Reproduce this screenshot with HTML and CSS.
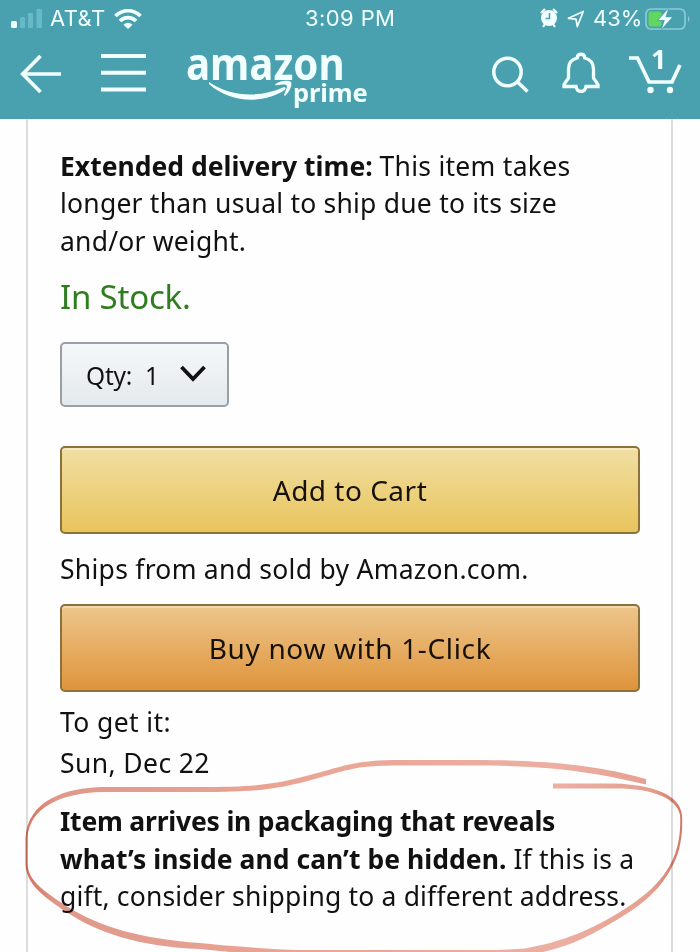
FILE: index.html
```html
<!DOCTYPE html>
<html lang="en">
<head>
<meta charset="utf-8">
<title>Amazon</title>
<link rel="stylesheet" href="styles.css">
</head>
<body>
<div class="screen">
  <header class="top">
    <div class="status">
      <div class="status-left">
        <svg class="signal" width="32" height="20" viewBox="0 0 32 20"><rect x="0" y="12" width="6" height="7" rx="1.5" fill="#f2ffff"/><g fill="#68b9c8"><rect x="9" y="8" width="5" height="11" rx="1"/><rect x="17" y="4" width="5" height="15" rx="1"/><rect x="25.500" y="0" width="5.500" height="19" rx="1"/></g></svg>
        <span class="carrier">AT&amp;T</span>
        <svg class="wifi" width="28" height="22" viewBox="0 0 28 22" fill="none" stroke="#f2ffff" stroke-width="3.700"><path d="M1.500 8A17.500 17.500 0 0 1 26.500 8"/><path d="M6 13A11.300 11.300 0 0 1 22 13"/><path d="M9.500 16.800Q14 12.800 18.500 16.800L14 21Z" fill="#f2ffff" stroke="none"/></svg>
      </div>
      <span class="clock">3:09 PM</span>
      <div class="status-right">
        <svg class="alarm" width="18" height="20" viewBox="0 0 18 20"><circle cx="9" cy="10" r="8" fill="#f2ffff"/><path d="M1 5 5 1M13 1l4 4M3 19l2-3M15 19l-2-3" stroke="#f2ffff" stroke-width="2.200"/><path d="M9.500 5v5.500H5.500" fill="none" stroke="#49a1b0" stroke-width="1.500"/></svg>
        <svg class="locate" width="18" height="18" viewBox="0 0 18 18"><path d="M1.500 8.300 16.300 1.500 10.300 16.500 9 9.200Z" fill="none" stroke="#f2ffff" stroke-width="1.700" stroke-linejoin="round"/></svg>
        <span class="percent">43%</span>
        <svg class="battery" width="46" height="22" viewBox="0 0 46 22"><rect x="1" y="1" width="39" height="20" rx="5" fill="none" stroke="#8bcbd6" stroke-width="1.700"/><path d="M43 8Q46 11 43 14Z" fill="#8bcbd6"/><rect x="3.500" y="3.500" width="13" height="15" rx="2.500" fill="#61d660"/><path d="M23 1 13.500 12h6.300L17 20.500 27 9.300h-6.500Z" fill="#f2ffff" stroke="#49a1b0" stroke-width="1.500" paint-order="stroke"/></svg>
      </div>
    </div>
    <nav class="nav">
      <svg class="back" width="42" height="40" viewBox="0 0 42 40" fill="none" stroke="#f2ffff" stroke-width="3.700"><path d="M20.500 2 2.700 20 20.500 38M2.700 20H41"/></svg>
      <svg class="menu" width="45" height="38" viewBox="0 0 45 38" stroke="#f2ffff" stroke-width="4"><path d="M0 2h45M0 18.700h45M0 35.500h45"/></svg>
      <div class="logo">
        <span class="brand">amazon</span>
        <svg class="smile" width="84" height="22" viewBox="0 0 84 22" fill="#f2ffff"><path d="M0 2C22 17 50 18 74 7.500C76 6.500 78 8.500 75 10.500C52 25 20 22 0 4Z"/><path d="M66.500 4C72 0 80 0 82 2C83.500 5 80.500 12 76.500 15.500C75.500 16 74.800 15.500 75.300 14.300C77 10 78.500 7 77.700 5.500C76.500 4 71.500 4.500 68 5.300C66.500 5.500 65.500 5 66.500 4Z"/></svg>
        <span class="prime">prime</span>
      </div>
      <svg class="search" width="37" height="38" viewBox="0 0 37 38" fill="none" stroke="#f2ffff" stroke-width="3.500"><circle cx="15.500" cy="16" r="13.700"/><path d="M25 25.500 35.500 35.500"/></svg>
      <svg class="bell" width="38" height="42" viewBox="0 0 38 42" fill="none" stroke="#f2ffff" stroke-width="3.300"><path d="M2 34.500V32.500L6.500 26V17C6.500 10.500 10 7.200 15.200 6C15.500 1 22.500 1 22.800 6C28 7.200 31.500 10.500 31.500 17V26L36 32.500V34.500H24C23 41 15 41 14 34.500Z"/></svg>
      <div class="cart">
        <svg width="54" height="40" viewBox="0 0 54 40"><path d="M0 3H8.500L20 27H43L51 10" fill="none" stroke="#f2ffff" stroke-width="3.700"/><circle cx="21.500" cy="35" r="3.200" fill="#f2ffff"/><circle cx="41" cy="35" r="3.200" fill="#f2ffff"/></svg>
        <span class="count">1</span>
      </div>
    </nav>
  </header>
  <main class="card">
    <p class="para">
      <span class="line l1"><b>Extended delivery time:</b> <span class="rest">This item takes</span></span>
      <span class="line l2">longer than usual to ship due to its size</span>
      <span class="line l3">and/or weight.</span>
    </p>
    <p class="stock"><span>In Stock.</span></p>
    <button class="qty"><span class="q">Qty:</span><span>1</span><svg width="28" height="20" viewBox="0 0 28 20"><path d="M2.500 3 14 15 25.500 3" fill="none" stroke="#111" stroke-width="3.800"/></svg></button>
    <button class="btn yellow"><span>Add to Cart</span></button>
    <p class="ships"><span>Ships from and sold by Amazon.com.</span></p>
    <button class="btn orange"><span>Buy now with 1-Click</span></button>
    <p class="get"><span class="line g1">To get it:</span><span class="line g2">Sun, Dec 22</span></p>
    <p class="para notice">
      <span class="line n1"><b>Item arrives in packaging that reveals</b></span>
      <span class="line n2"><b>what’s inside and can’t be hidden.</b> <span class="rest">If this is a</span></span>
      <span class="line n3">gift, consider shipping to a different address.</span>
    </p>
  </main>
  <svg class="ring" width="700" height="212" viewBox="0 740 700 212">
    <defs><linearGradient id="ink" gradientUnits="userSpaceOnUse" x1="0" x2="700" y1="0" y2="0"><stop offset=".035" stop-color="#d56f5a"/><stop offset=".08" stop-color="#e0998a"/><stop offset=".4" stop-color="#eba595"/><stop offset=".8" stop-color="#edb0a3"/><stop offset=".93" stop-color="#e6a090"/><stop offset=".975" stop-color="#d37763"/></linearGradient></defs>
    <path fill="url(#ink)" fill-rule="evenodd" d="M646 779C610 769 565 760 475 760H400C350 760 340 768 300 777.500C270 785 250 787 200 787H103C65 788 28 800 25.500 838V864C26 884 44 897 65 911C95 932 140 947 200 949L260 955H525C565 950 590 936 620 918C655 897 666 879 674 863C681 849 683 830 682 815C680 794 652 785 615 783.500H553V788.500H615C651 788 677 798 680 815C681 830 679 848 671 863C662 880 650 893 620 912C590 930 565 941 525 948.500Q500 950.500 460 950H300C270 949 240 947 200 943C140 939 98 926 68 907C45 892 28 881 27.500 864V838C29 808 60 793 103 792H200C250 792 270 790 300 783C350 770 350 765.500 400 765.500H475C560 765.500 605 775 646 784.500Z"/>
  </svg>
</div>
</body>
</html>
```
FILE: styles.css
```css
* { box-sizing: border-box; }
body { margin: 0; background: #fefefe; }
p { margin: 0; }
svg { display: block; flex: none; }
.screen { position: relative; width: 700px; height: 952px; overflow: hidden; font-family: "Noto Sans", sans-serif; color: #111; white-space: nowrap; }

.top { height: 119px; background: #49a1b0; color: #f2ffff; }
.status { display: grid; grid-template-columns: 1fr auto 1fr; height: 37px; align-items: center; font: 22px/37px Inter, sans-serif; }
.status-left { display: flex; align-items: center; padding-left: 11px; }
.carrier { margin-left: 7px; width: 55px; letter-spacing: .4px; }
.wifi { margin-left: 9px; }
.clock { width: 90px; letter-spacing: .4px; }
.status-right { display: flex; align-items: center; justify-content: flex-end; padding-right: 9px; }
.locate { margin-left: 9px; }
.percent { margin-left: 8px; width: 47px; }
.battery { margin-left: 5px; }
.alarm { margin-top: -2px; }
.nav { display: flex; height: 82px; padding-left: 20px; }
.back { margin-top: 17px; }
.menu { margin: 17px 0 0 39px; }
.logo { position: relative; width: 184px; height: 82px; margin-left: 40px; }
.brand { display: block; width: 184px; font: 700 44px/44px "Noto Sans", sans-serif; margin-top: 4px; transform: scaleX(.915); transform-origin: 0 0; }
.smile { position: absolute; left: 23px; top: 43px; }
.prime { position: absolute; left: 107px; top: 39px; font: 700 25.500px/32px "Noto Sans", sans-serif; letter-spacing: -.1px; }
.search { margin: 19px 0 0 122px; }
.bell { margin: 15px 0 0 33px; }
.cart { position: relative; margin: 18px 0 0 29px; }
.count { position: absolute; left: 22px; top: -12px; font: 700 27px/32px "Noto Sans", sans-serif; }

.card { margin: 0 27px 0 26px; height: 833px; padding: 29px 31px 0 32px; border: solid #dcdcdc; border-width: 0 2px; }
.para { font-size: 26.500px; line-height: 37.400px; }
.line { display: block; }
.l1 .rest { letter-spacing: .27px; }
.l2 { letter-spacing: .22px; }
.l3 { letter-spacing: .2px; }
.stock { margin-top: 14px; font-size: 33px; line-height: 46px; color: #2f7d1e; letter-spacing: -.2px; }
.qty { display: flex; align-items: center; width: 169px; height: 65px; margin-top: 22px; padding: 3px 0 0 24px; border: 2px solid #9a9fa6; border-radius: 5px; background: linear-gradient(#f5f8fa, #e4e9ed); font: 24.500px/34px "Noto Sans", sans-serif; color: #111; }
.q { width: 59px; text-align: left; letter-spacing: -.2px; }
.qty svg { margin: -4px 0 0 20px; }
.btn { display: block; width: 580px; height: 88px; padding: 0; border: 2px solid #8c713a; border-radius: 5px; font: 28px/84px "Noto Sans", sans-serif; color: #16110a; box-shadow: inset 0 2px 0 #ffffff55; }
.yellow { margin-top: 39px; background: linear-gradient(#f1dfa3, #e8c45c); letter-spacing: .5px; }
.ships { font-size: 26.500px; line-height: 70px; letter-spacing: .27px; }
.orange { background: linear-gradient(#edc68c, #df943b); letter-spacing: .65px; }
.get { padding-top: 10px; font-size: 26.500px; line-height: 41px; letter-spacing: .4px; }
.notice { margin-top: 19px; }
.n1 { letter-spacing: -.2px; }
.n2 b { letter-spacing: .05px; }
.n2 .rest { letter-spacing: .2px; }
.n3 { letter-spacing: .17px; }
.ring { position: absolute; left: 0; top: 740px; mix-blend-mode: multiply; }
```
